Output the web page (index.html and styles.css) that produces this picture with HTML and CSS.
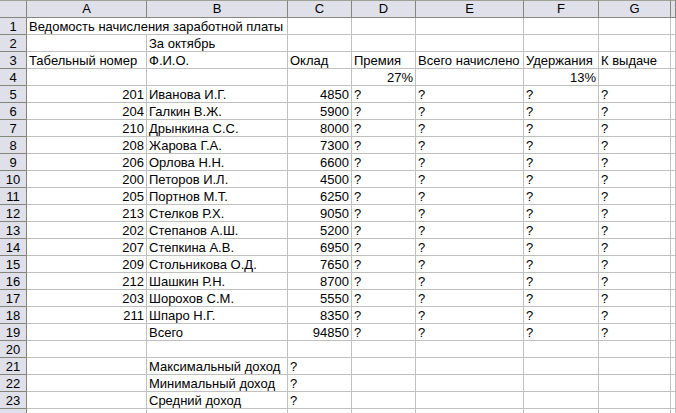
FILE: index.html
```html
<!DOCTYPE html>
<html lang="ru">
<head>
<meta charset="utf-8">
<title>Ведомость</title>
<link rel="stylesheet" href="styles.css">
</head>
<body>
<div class="sheet">
  <div class="ch corner"></div><div class="ch">A</div><div class="ch">B</div><div class="ch">C</div><div class="ch">D</div><div class="ch">E</div><div class="ch">F</div><div class="ch">G</div><div class="ch"></div>

  <div class="rh">1</div><div class="c span2">Ведомость начисления заработной платы</div><div class="c"></div><div class="c"></div><div class="c"></div><div class="c"></div><div class="c"></div><div class="c"></div>
  <div class="rh">2</div><div class="c"></div><div class="c">За октябрь</div><div class="c"></div><div class="c"></div><div class="c"></div><div class="c"></div><div class="c"></div><div class="c"></div>
  <div class="rh">3</div><div class="c">Табельный номер</div><div class="c">Ф.И.О.</div><div class="c">Оклад</div><div class="c">Премия</div><div class="c">Всего начислено</div><div class="c">Удержания</div><div class="c">К выдаче</div><div class="c"></div>
  <div class="rh">4</div><div class="c"></div><div class="c"></div><div class="c"></div><div class="c n">27%</div><div class="c"></div><div class="c n">13%</div><div class="c"></div><div class="c"></div>

  <div class="rh">5</div><div class="c n">201</div><div class="c">Иванова И.Г.</div><div class="c n">4850</div><div class="c">?</div><div class="c">?</div><div class="c">?</div><div class="c">?</div><div class="c"></div>
  <div class="rh">6</div><div class="c n">204</div><div class="c">Галкин В.Ж.</div><div class="c n">5900</div><div class="c">?</div><div class="c">?</div><div class="c">?</div><div class="c">?</div><div class="c"></div>
  <div class="rh">7</div><div class="c n">210</div><div class="c">Дрынкина С.С.</div><div class="c n">8000</div><div class="c">?</div><div class="c">?</div><div class="c">?</div><div class="c">?</div><div class="c"></div>
  <div class="rh">8</div><div class="c n">208</div><div class="c">Жарова Г.А.</div><div class="c n">7300</div><div class="c">?</div><div class="c">?</div><div class="c">?</div><div class="c">?</div><div class="c"></div>
  <div class="rh">9</div><div class="c n">206</div><div class="c">Орлова Н.Н.</div><div class="c n">6600</div><div class="c">?</div><div class="c">?</div><div class="c">?</div><div class="c">?</div><div class="c"></div>
  <div class="rh">10</div><div class="c n">200</div><div class="c">Петоров И.Л.</div><div class="c n">4500</div><div class="c">?</div><div class="c">?</div><div class="c">?</div><div class="c">?</div><div class="c"></div>
  <div class="rh">11</div><div class="c n">205</div><div class="c">Портнов М.Т.</div><div class="c n">6250</div><div class="c">?</div><div class="c">?</div><div class="c">?</div><div class="c">?</div><div class="c"></div>
  <div class="rh">12</div><div class="c n">213</div><div class="c">Стелков Р.Х.</div><div class="c n">9050</div><div class="c">?</div><div class="c">?</div><div class="c">?</div><div class="c">?</div><div class="c"></div>
  <div class="rh">13</div><div class="c n">202</div><div class="c">Степанов А.Ш.</div><div class="c n">5200</div><div class="c">?</div><div class="c">?</div><div class="c">?</div><div class="c">?</div><div class="c"></div>
  <div class="rh">14</div><div class="c n">207</div><div class="c">Степкина А.В.</div><div class="c n">6950</div><div class="c">?</div><div class="c">?</div><div class="c">?</div><div class="c">?</div><div class="c"></div>
  <div class="rh">15</div><div class="c n">209</div><div class="c">Стольникова О.Д.</div><div class="c n">7650</div><div class="c">?</div><div class="c">?</div><div class="c">?</div><div class="c">?</div><div class="c"></div>
  <div class="rh">16</div><div class="c n">212</div><div class="c">Шашкин Р.Н.</div><div class="c n">8700</div><div class="c">?</div><div class="c">?</div><div class="c">?</div><div class="c">?</div><div class="c"></div>
  <div class="rh">17</div><div class="c n">203</div><div class="c">Шорохов С.М.</div><div class="c n">5550</div><div class="c">?</div><div class="c">?</div><div class="c">?</div><div class="c">?</div><div class="c"></div>
  <div class="rh">18</div><div class="c n">211</div><div class="c">Шпаро Н.Г.</div><div class="c n">8350</div><div class="c">?</div><div class="c">?</div><div class="c">?</div><div class="c">?</div><div class="c"></div>
  <div class="rh">19</div><div class="c"></div><div class="c">Всего</div><div class="c n">94850</div><div class="c">?</div><div class="c">?</div><div class="c">?</div><div class="c">?</div><div class="c"></div>
  <div class="rh">20</div><div class="c"></div><div class="c"></div><div class="c"></div><div class="c"></div><div class="c"></div><div class="c"></div><div class="c"></div><div class="c"></div>
  <div class="rh">21</div><div class="c"></div><div class="c">Максимальный доход</div><div class="c">?</div><div class="c"></div><div class="c"></div><div class="c"></div><div class="c"></div><div class="c"></div>
  <div class="rh">22</div><div class="c"></div><div class="c">Минимальный доход</div><div class="c">?</div><div class="c"></div><div class="c"></div><div class="c"></div><div class="c"></div><div class="c"></div>
  <div class="rh">23</div><div class="c"></div><div class="c">Средний доход</div><div class="c">?</div><div class="c"></div><div class="c"></div><div class="c"></div><div class="c"></div><div class="c"></div>
  <div class="rh">24</div><div class="c"></div><div class="c"></div><div class="c"></div><div class="c"></div><div class="c"></div><div class="c"></div><div class="c"></div><div class="c"></div>
</div>
</body>
</html>
```
FILE: styles.css
```css
html, body {
  margin: 0;
  padding: 0;
  background: #ffffff;
  overflow: hidden;
}

.sheet {
  display: grid;
  grid-template-columns: 27px 120px 141px 64px 64px 108px 75px 72px 1fr;
  grid-template-rows: 18px;
  grid-auto-rows: 17px;
  width: 676px;
  font-family: "Liberation Sans", Arial, sans-serif;
  font-size: 13px;
  color: #000000;
}

.sheet > div {
  box-sizing: border-box;
  line-height: 17px;
  white-space: nowrap;
  overflow: visible;
}

.ch {
  background: #e0e0ea;
  border-top: 1px solid #a0a096;
  border-right: 1px solid #85857a;
  border-bottom: 1px solid #85857a;
  text-align: center;
  line-height: 16px !important;
}

.corner {
  background: #e0e0ea;
}

.rh {
  background: #e0e0ea;
  border-right: 1px solid #85857a;
  border-bottom: 1px solid #85857a;
  text-align: center;
}

.c {
  border-right: 1px solid #c0c0c0;
  border-bottom: 1px solid #c0c0c0;
  padding: 0 2px 0 2px;
}

.n {
  text-align: right;
}

.span2 {
  grid-column: span 2;
}
```
